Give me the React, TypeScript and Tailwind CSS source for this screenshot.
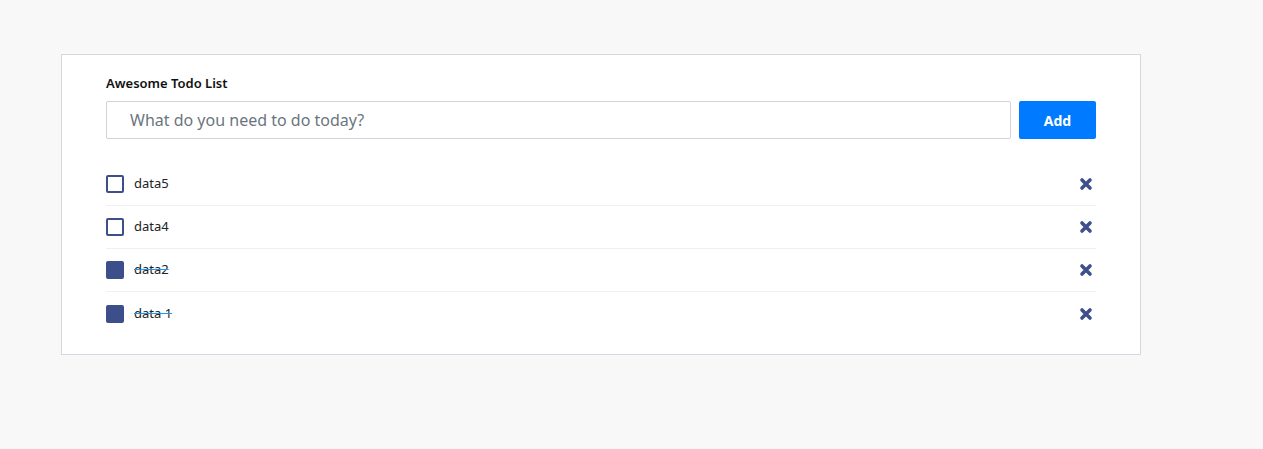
import React, { useState } from 'react';

interface Todo {
  id: number;
  text: string;
  done: boolean;
}

const initial: Todo[] = [
  { id: 5, text: 'data5', done: false },
  { id: 4, text: 'data4', done: false },
  { id: 2, text: 'data2', done: true },
  { id: 1, text: 'data 1', done: true },
];

function CrossIcon() {
  return (
    <svg width="14" height="14" viewBox="0 0 14 14" aria-hidden="true">
      <path d="M3 3 L11 11 M11 3 L3 11" stroke="#3f4f8a" strokeWidth="3.6" strokeLinecap="round" />
    </svg>
  );
}

export default function App() {
  const [todos, setTodos] = useState<Todo[]>(initial);
  const [text, setText] = useState('');

  const add = () => {
    if (!text.trim()) return;
    setTodos([{ id: Date.now(), text, done: false }, ...todos]);
    setText('');
  };

  const toggle = (id: number) =>
    setTodos(todos.map(t => (t.id === id ? { ...t, done: !t.done } : t)));
  const remove = (id: number) => setTodos(todos.filter(t => t.id !== id));

  return (
    <div className="min-h-[449px] bg-[#f8f8f9] pt-[54px] pl-[61px] font-['Noto_Sans','Open_Sans',sans-serif]">
      <div className="w-[1080px] h-[301px] bg-white border border-[#d7d6e1] px-[44px] pt-[19px]">
        <h1 className="text-[13px] font-semibold text-[#111] leading-[18px]">Awesome Todo List</h1>

        {/* Input row */}
        <div className="flex gap-[8px] mt-[9px]">
          <input
            value={text}
            onChange={e => setText(e.target.value)}
            placeholder="What do you need to do today?"
            className="flex-1 h-[38px] border border-[#ced4da] rounded-[2px] pl-[23px] text-[16px] text-[#495057] placeholder:text-[#6c757d] outline-none"
          />
          <button
            onClick={add}
            className="w-[77px] h-[38px] bg-[#007bff] text-white text-[14px] font-bold rounded-[2px]"
          >
            Add
          </button>
        </div>

        {/* List */}
        <ul className="mt-[24px]">
          {todos.map((t, i) => (
            <li
              key={t.id}
              className={`flex items-center h-[43px] ${i < todos.length - 1 ? 'border-b border-[#f0f0f2]' : ''}`}
            >
              <button
                onClick={() => toggle(t.id)}
                className={`w-[18px] h-[18px] rounded-[2px] border-2 border-[#3d4f8b] ${t.done ? 'bg-[#3d4f8b]' : 'bg-white'}`}
              />
              <span
                className={`ml-[10px] text-[13px] text-[#222] ${t.done ? 'line-through decoration-[#2196f3]' : ''}`}
              >
                {t.text}
              </span>
              <button onClick={() => remove(t.id)} className="ml-auto mr-[3px] flex items-center">
                <CrossIcon />
              </button>
            </li>
          ))}
        </ul>
      </div>
    </div>
  );
}
